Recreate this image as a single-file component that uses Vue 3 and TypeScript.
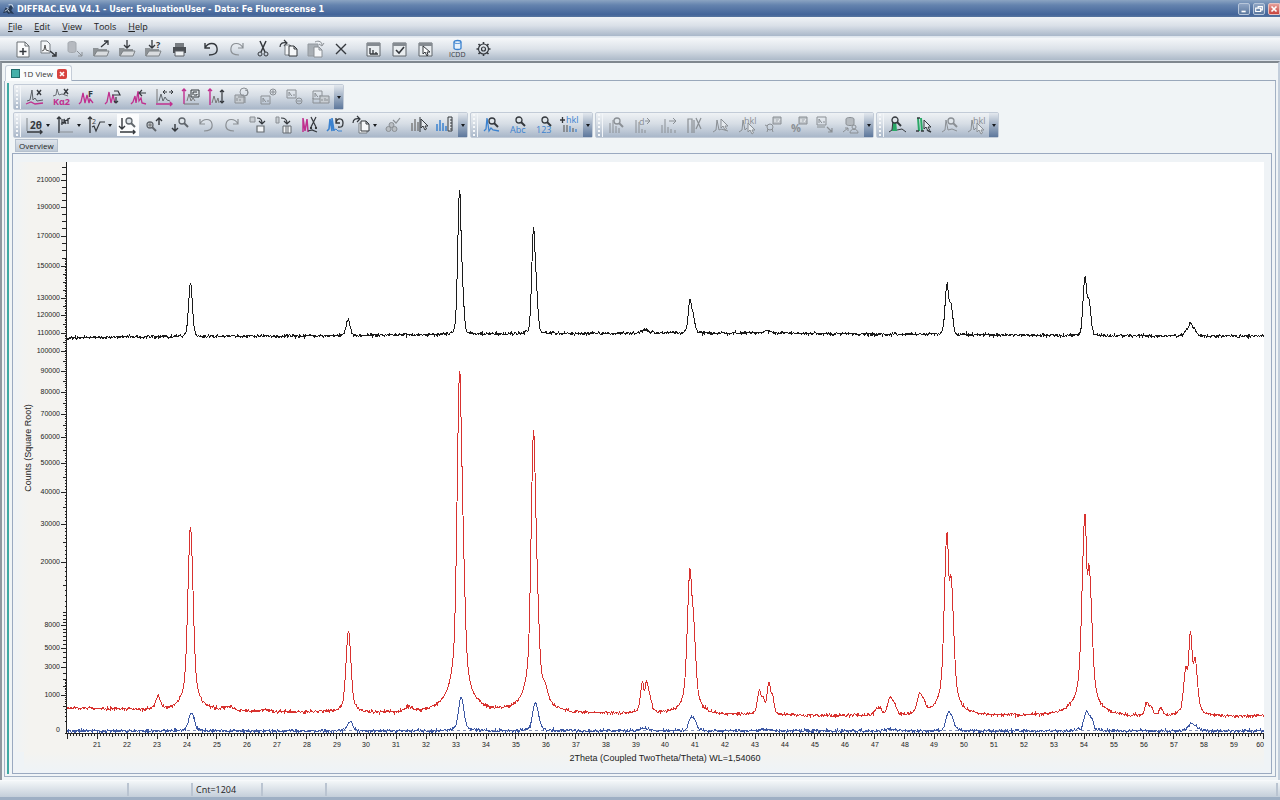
<script setup lang="ts">
interface Part { d?: string; s?: string; f?: string; w?: number; t?: string; x?: number; y?: number; z?: number; b?: boolean }
interface Tool { label: string; parts: Part[]; menu?: boolean; active?: boolean; gap?: boolean; off?: boolean }

const K = '#34383d'
const M = '#c0308f'
const G = '#8a8f94'
const B = '#3b82cf'
const N = '#2aa866'

const ln = (d: string, s = K, w = 1): Part => ({ d, s, w })
const fl = (d: string, f = K, s = 'none', w = 1): Part => ({ d, f, s, w })
const tx = (t: string, x: number, y: number, z: number, f = K, b = false): Part => ({ t, x, y, z, f, b })
const tool = (label: string, parts: Part[], extra: Partial<Tool> = {}): Tool => ({ label, parts, ...extra })
const off = { off: true }

const mag = (x: number, y: number, s = K): Part[] => [
  { d: `M${x - 3} ${y}a3 3 0 1 0 6 0a3 3 0 1 0 -6 0`, s, f: '#dfe5ea', w: 1.3 },
  ln(`M${x + 2} ${y + 2}l4 4`, s, 2),
]
const arrowCursor = (x: number, y: number, s = K): Part => fl(`M${x} ${y}v9l2 -2l2 4l1.500 -1l-1.500 -3h3z`, '#e4e9ee', s)
const folder = [fl('M2 9h5l1 1h8v7H2z', '#8d9296'), fl('M3 17l3 -5h12l-2 5z', '#d9dcdf', '#7d8286')]
const picture = (x: number, y: number, s = G): Part => ln(`M${x} ${y}h9v8h-9zM${x + 2} ${y + 6}v-4l2 3l1 1M${x + 7} ${y + 6}v-2`, s)
const corner = [fl('M10 2h8v7h-8z', '#bfc4c9', G), ln('M12 7v-3M15 7l2 -3', '#eef1f4')]
const page = (x: number, y: number, s = K): Part => fl(`M${x} ${y}h5l3 3v7h-8zM${x + 5} ${y}v3h3`, '#f5f7f9', s)
const undo = 'M4 4v5h5M4 9C7 3 15 3 16 9S12 16 8 16'
const redo = 'M16 4v5h-5M16 9C13 3 5 3 4 9S8 16 12 16'
const cut = [ln('M7 2L12 13M13 2L8 13', K, 1.5), ln('M9 15a2 2 0 1 1 -4 0a2 2 0 1 1 4 0M15 15a2 2 0 1 1 -4 0a2 2 0 1 1 4 0')]
const frame = [fl('M4 4h13v13H4z', '#e9edf0', '#5f656b'), fl('M4 4h13v3H4z', '#858b91')]

const mainTools: Tool[] = [
  tool('New', [fl('M4 3h8l4 4v11H4z', '#fafbfc', '#6b7075'), ln('M12 3v4h4', '#6b7075'), ln('M10 9v7M6.500 12.500h7', K, 1.5)]),
  tool('Import scan', [fl('M2 2h6l3 3v9H2z', '#f4f6f8', '#777c82'), ln('M3 12l2 -1l1 -5l1 5l3 1', '#555'), ln('M11 12l6 5M17 13v4h-4', K, 1.500)]),
  tool('Import from database', [fl('M3 4c0 -2 8 -2 8 0v8c0 2 -8 2 -8 0z', '#b6bac0', '#a3a8ae'), ln('M12 12l5 5M17 13v4h-4', G)], off),
  tool('Open', [...folder, ln('M10 8L17 2M13 2h4v4', K, 1.300)]),
  tool('Save', [...folder, ln('M10 1v8M7 6l3 3l3 -3', K, 1.300)]),
  tool('Save as', [...folder, ln('M9 1v8M6 6l3 3l3 -3', K, 1.300), tx('?', 13, 9, 9, K, true)]),
  tool('Print', [fl('M4 8h13v6H4z', '#4b4f54'), fl('M6 4h9v4H6z', '#777c81'), fl('M6 12h9v5H6z', '#eef1f3', '#5a5f64')]),
  tool('Undo', [ln(undo, K, 1.400)], { gap: true }),
  tool('Redo', [ln(redo, G, 1.200)], off),
  tool('Cut', cut),
  tool('Copy', [ln('M1 8C1 4 4 3 8 4M5 1l3 3l-3 3', K, 1.200), page(6, 6, '#777c82'), page(10, 7)]),
  tool('Paste', [fl('M3 5h10v12H3z', '#a9afb5', '#92989e'), page(9, 8, G), ln('M10 3C14 1 17 3 17 6M14 5l3 2l2 -3', G)], off),
  tool('Delete', [ln('M5 5L15 15M15 5L5 15', K, 1.400)]),
  tool('Scan list', [...frame, ln('M7 9v6M7 15h8M10 15v-4M13 15v-2', K, 1.300)], { gap: true }),
  tool('Check list', [...frame, ln('M7 11l3 3l5 -6', K, 1.600)]),
  tool('Pick', [...frame, fl('M8 7v8l2 -2l2 4l1 -1l-1 -3h3z', '#fff', K)]),
  tool('ICDD', [fl('M7 3c0 -2 7 -2 7 0v6c0 2 -7 2 -7 0z', '#e8f2fb', B, 1.300), ln('M7 3c0 2 7 2 7 0', B), tx('ICDD', 2, 18, 7, K)], { gap: true }),
  tool('Settings', [ln('M5.500 10a5 5 0 1 0 10 0a5 5 0 1 0 -10 0M8.500 10a2 2 0 1 0 4 0a2 2 0 1 0 -4 0', K, 1.200), ln('M10.500 3v2M10.500 15v2M3.500 10h2M15.500 10h2M5.500 5l1.500 1.500M14 13.500l1.500 1.500M15.500 5l-1.500 1.500M7 13.500l-1.500 1.500', K, 1.600)]),
]

const editTools: Tool[] = [
  tool('Remove background', [ln('M2 14L5 13L7 3L8 13L10 11L12 14L18 13', '#5b6066'), ln('M1 17L6 15L10 17L18 16', M, 1.300), ln('M12 3l4 5M16 3l-4 5', K, 1.400)]),
  tool('Strip K-alpha-2', [ln('M2 9L5 8L6 2L8 8L11 7L17 9', '#6b7076'), ln('M13 2l4 5M17 2l-4 5', K, 1.400), tx('Kα2', 2, 18, 9, M, true)]),
  tool('Fourier smoothing', [ln('M2 17L4 15L6 6L8 16L10 8L12 16L13 12L16 16', M, 1.300), tx('F', 11, 10, 9, K, true)]),
  tool('Smooth', [ln('M2 17L4 15L6 5L8 16L10 8L12 16', M, 1.300), ln('M9 8h8l-2 -4h-4M13 10v6M11 14l2 2l2 -2', K, 1.200)]),
  tool('Shift', [ln('M2 17L4 15L6 9L7 16L9 4L10 14L12 11L13 16L17 17', M, 1.300), ln('M17 6h-6M13 3l-3 3l3 3', K, 1.200)]),
  tool('X offset', [ln('M2 2v14', '#777'), ln('M4 14L6 7L8 14L10 10L12 13L15 14', '#60666c'), ln('M1 17h16M15 15l2 2l-2 2', M, 1.400), ln('M9 5h3M10 3l-2 2l2 2M14 5h3M16 3l2 2l-2 2', K)]),
  tool('Y scale', [ln('M3 17V2M1 4l2 -2l2 2', M, 1.400), ln('M3 17h15M6 14L8 7L10 14L12 11L14 14', '#777'), fl('M10 3h8v7h-8z', '#dfe4e9', K), ln('M12 8v-3h4M13 8h3v-1')]),
  tool('Y offset', [ln('M3 18V2M1 4l2 -2l2 2', M, 1.400), ln('M5 16L7 9L9 16L11 11L12 16', '#777'), ln('M15 3v13M13 5l2 -2l2 2M13 14l2 2l2 -2', K, 1.200)]),
  tool('Merge scans', [fl('M2 8h9v8H2z', '#c6cbd0', G), fl('M7 5a4 4 0 1 0 8 0a4 4 0 1 0 -8 0M5 10h7v6', 'none', G), ln('M12 3a3 3 0 1 1 0 6M4 14v-3M7 14v-2', G)], off),
  tool('Add scan', [picture(2, 9), ln('M11 5a3 3 0 1 0 6 0a3 3 0 1 0 -6 0M14 3v4M12 5h4', G)], off),
  tool('Subtract scan', [picture(2, 3), ln('M11 14a3 3 0 1 0 6 0a3 3 0 1 0 -6 0M12 14h4', G)], off),
  tool('Duplicate scan', [picture(2, 4), fl('M9 9h9v7H9z', '#c9ced3', G), ln('M11 14v-2M14 14v-3M16 14v-2M2 11v5h7', G)], off),
]

const viewTools: Tool[] = [
  tool('2 theta axis', [ln('M2 3v13', '#81878c'), ln('M2 17h15M15 15l2 2l-2 2', K, 1.400), tx('2θ', 5, 14, 10, K, true)], { menu: true }),
  tool('Y axis', [ln('M3 18V2M1 4l2 -2l2 2', K, 1.400), ln('M3 17h14', G), ln('M6 10V4M8 9V4L10 9M12 9V3M5 9L14 3', K, 1.200)], { menu: true }),
  tool('Square root scale', [ln('M3 18V2M1 4l2 -2l2 2', K, 1.300), tx('2', 5, 9, 7), ln('M5 12l2 -1l2 5l4 -9h5', K, 1.200)], { menu: true }),
  tool('Fit range', [ln('M4 3v11M1 11l3 3l3 -3M2 17h15M15 15l2 2l-2 2', K, 1.400), ...mag(11, 6, '#60666c')], { active: true }),
  tool('Zoom in', [...mag(6, 10, '#60666c'), ln('M4 10h4M6 8v4', '#666', 1), ln('M15 10V3M12 6l3 -3l3 3', K, 1.400)]),
  tool('Zoom out', [ln('M5 9v7M2 13l3 3l3 -3', K, 1.400), ...mag(12, 6, '#60666c')]),
  tool('Undo zoom', [ln(undo, G, 1.200)], off),
  tool('Redo zoom', [ln(redo, G, 1.200)], off),
  tool('Stack', [fl('M2 2h5v5H2z', '#c9ced3', G), fl('M9 11h7v6H9z', '#f2f4f6', '#656b70', 1.200), ln('M9 3c4 0 5 2 5 5M11 6l3 3l3 -3', K, 1.200)]),
  tool('Waterfall', [fl('M2 2h3v6H2z', '#c9ced3', G), fl('M9 11h8v7H9z', '#f2f4f6', '#656b70'), ln('M12 11v7M14 11v7', '#656b70'), ln('M7 3c5 0 6 2 6 5M10 6l3 3l3 -3', K, 1.200)]),
  tool('Cut range', [ln('M3 17V3L5 16L7 4L8 17', M, 1.500), ln('M11 2l5 10M16 2l-5 10M8 16l4 -1l5 2', K, 1.200), ln('M10 13h2M15 13h2', K, 2)]),
  tool('Restore range', [ln('M1 16L3 14L4 4L6 16V3L8 16', B, 1.600), ln('M8 15L10 14L12 16L16 16', B), ln('M10 3v5h4M10 8C11 2 17 3 17 8S14 12 12 12', K, 1.300)]),
  tool('Copy view', [ln('M1 8C1 4 4 3 8 4M5 1l3 3l-3 3', K, 1.200), page(7, 8, '#777c82'), page(9, 6)], { menu: true }),
  tool('Area', [fl('M6 10a2 2 0 1 0 5 0a2 2 0 1 0 -5 0M3 14a2 2 0 1 0 5 0a2 2 0 1 0 -5 0M9 14a2 2 0 1 0 5 0a2 2 0 1 0 -5 0', '#b9bec3', G), ln('M10 5l3 3l4 -5', G, 1.200)], off),
  tool('Select lines', [ln('M3 16V8M6 16V4M9 16V7', '#777', 1.400), ln('M11 17V2', K), arrowCursor(12, 4)]),
  tool('Ruler', [ln('M2 16V9M5 16V5M8 16V8M11 16v-5', B, 1.500), fl('M13 2h4v14h-4z', '#dfe4e9', K), ln('M15 5h2M15 8h2M15 11h2M15 14h2')]),
]

const searchTools: Tool[] = [
  tool('Search peaks', [ln('M2 16L4 14L5 3L7 16L9 13L11 15L17 16', B, 1.300), ...mag(10, 6)]),
  tool('Search by name', [...mag(11, 5), tx('Abc', 2, 18, 9, B)]),
  tool('Search by number', [...mag(11, 5), tx('123', 2, 18, 9, B)]),
  tool('Add hkl', [ln('M0 5h5M2.500 2v6', K, 1.300), tx('hkl', 6, 8, 9, B), ln('M4 17V10M7 17v-7M13 17v-4', '#666', 1.200), ln('M10 17v-6M16 17v-3', B, 1.200)]),
]

const lineTools: Tool[] = [
  tool('Find lines', [ln('M3 18V8M6 18V5M9 18V11M12 18V13', G), ...mag(10, 6, G)], off),
  tool('d shift', [ln('M3 18V5M6 18V7M9 18v-4M12 18v-3', G), tx('d', 6, 10, 9, G), ln('M12 6h5M14 3l3 3l-3 3', G)], off),
  tool('Move lines', [ln('M3 18V10M6 18V4M9 18v-6M12 18v-4M16 18v-3M10 6h7M14 3l3 3l-3 3', G)], off),
  tool('Cut lines', [ln('M3 18V4h4V18M9 18V5M11 3l5 11M16 3l-5 11', G, 1.200)], off),
  tool('Pick peak', [ln('M2 17L5 15L6 5L8 15L10 14L17 16', G), arrowCursor(10, 4, G)], off),
  tool('Pick hkl', [ln('M2 17L5 15L6 5L8 15L10 13', G), arrowCursor(11, 8, G), tx('hkl', 7, 9, 9, G)], off),
  tool('Tune cell', [ln('M4 12a3 3 0 1 0 6 0a3 3 0 1 0 -6 0M4 17l1 -3M10 17l-1 -3M2 10l2 1', G), ...corner], off),
  tool('Quantify', [tx('%', 2, 17, 11, G, true), ...corner], off),
  tool('Export picture', [picture(2, 2), ln('M2 12h8M12 12l5 5M17 13v4h-4', G, 1.200)], off),
  tool('Export to database', [fl('M5 4c0 -2 8 -2 8 0v5c0 2 -8 2 -8 0z', '#b6bbc0', G), ln('M2 17l5 -4M4 13h3v3M11 12a2 2 0 1 0 4 0a2 2 0 1 0 -4 0M9 18c0 -5 8 -5 8 0z', G)], off),
]

const areaTools: Tool[] = [
  tool('Peak search', [fl('M4 16L5 5H8L9 16z', N), ln('M1 17L4 15L5 5M9 15L14 14L18 17', K), ...mag(7, 5)]),
  tool('Pick area', [ln('M4 3L5 16M7 3L8 16', N, 2), ln('M2 16h3M3 3h3M7 16h3M13 15l4 2', K, 1.500), arrowCursor(10, 5)]),
  tool('Peak details', [ln('M2 17L5 15L6 5L8 15L12 14L17 16', G), ...mag(11, 6, G)], off),
  tool('Assign hkl', [ln('M2 17L5 15L6 5L8 15L10 13', G), arrowCursor(11, 8, G), tx('hkl', 7, 9, 9, G)], off),
]

const rows = [
  [{ name: 'Edit scan', tools: editTools }],
  [
    { name: 'View', tools: viewTools },
    { name: 'Search', tools: searchTools },
    { name: 'Lines', tools: lineTools },
    { name: 'Areas', tools: areaTools },
  ],
]
const menus = ['File', 'Edit', 'View', 'Tools', 'Help']

/* Chart geometry */
const left = 66
const zeroY = 733
const perRoot = 1.2066
const perDegree = 29.9
const xOf = (t: number) => 67.4 + (t - 20) * perDegree
const yOf = (c: number) => zeroY - perRoot * Math.sqrt(Math.max(c, 0))
const countsAt = (y: number) => ((zeroY - y) / perRoot) ** 2

const yLabels = [210000, 190000, 170000, 150000, 130000, 120000, 110000, 100000, 90000, 80000, 70000, 60000, 50000, 40000, 30000, 20000, 8000, 5000, 3000, 1000]

function yTicks(): string {
  const out: string[] = []
  const put = (c: number, len: number) => out.push(`M${left - len} ${Math.round(yOf(c)) + 0.5}H${left}`)
  for (let c = 155000; c <= 220000; c += 5000) put(c, 4)
  for (let c = 10000; c < 155000; c += 1000) put(c, c % 5000 === 0 ? 3 : 1)
  for (let c = 500; c <= 10000; c += 500) put(c, 3)
  for (let c = 0; c < 2000; c += 100) put(c, 1)
  yLabels.forEach((c) => put(c, 5))
  return out.join('')
}

function xTicks(): string {
  let d = ''
  for (let i = 0; i <= 400; i++) {
    const len = i % 10 === 0 ? 5 : i % 5 === 0 ? 3 : 2
    d += `M${Math.floor(xOf(20 + i / 10)) + 0.5} 734v${len}`
  }
  return d
}
const xLabels = Array.from({ length: 39 }, (_, i) => i + 21)

type Pt = [number, number]
type Peak = [number, number, number, number?]

function level(base: Pt[], x: number): number {
  for (let i = 1; i < base.length; i++) {
    const [x0, y0] = base[i - 1]
    const [x1, y1] = base[i]
    if (x <= x1) return y0 + ((y1 - y0) * (x - x0)) / (x1 - x0)
  }
  return base[base.length - 1][1]
}

const shape = (x: number, p: Peak, eta: number) => {
  const q = ((x - p[0]) / (x > p[0] ? p[3] ?? p[2] : p[2])) ** 2
  return eta / (1 + q) + (1 - eta) * Math.exp(-0.693 * q)
}

/* Peaks are [x, apex y, half width, right half width]; amplitudes are solved so that the sum passes each apex. */
function trace(base: Pt[], list: Peak[], eta: number, noise: number, seed: number): string {
  const amp = list.map(([x, y]) => countsAt(y) - countsAt(level(base, x)))
  const total = (x: number, skip = -1) =>
    list.reduce((sum, p, i) => (i === skip ? sum : sum + amp[i] * shape(x, p, eta)), countsAt(level(base, x)))
  for (let n = 0; n < 30; n++) list.forEach((p, i) => { amp[i] = Math.max(0, countsAt(p[1]) - total(p[0], i)) })
  let state = seed
  const rnd = () => {
    state = (state * 1103515245 + 12345) % 2147483648
    return state / 2147483648 - 0.5
  }
  const pts: string[] = []
  for (let x = 67; x <= 1264; x += 0.6) {
    const y = yOf(total(x))
    const calm = y < level(base, x) - 15 ? 0.2 : 1
    pts.push(`${x.toFixed(1)},${(y + (rnd() + rnd()) * noise * calm).toFixed(1)}`)
  }
  return pts.join(' ')
}

const black = trace(
  [[67, 338], [120, 337], [300, 336], [400, 335], [500, 334], [650, 333], [770, 333], [850, 334], [1000, 335], [1100, 336], [1264, 336]],
  [[190.5, 283, 2.2], [348, 321, 2.4], [459.5, 189, 2, 1.5], [462, 262, 1.4, 2], [533.5, 227, 2, 1.5], [536, 272, 1.4, 2], [645, 330, 4], [690, 299, 2, 1.6], [693, 312, 1.5, 2], [768, 331, 4], [947, 284, 2.2, 1.9], [951, 303, 1.8, 2], [1085, 276, 2.2, 1.9], [1089, 299, 1.8, 2.2], [1186, 330, 2], [1190.5, 322, 2], [1194.5, 328, 2]],
  0.2, 1.8, 7,
)
const red = trace(
  [[67, 708], [110, 709], [170, 711], [230, 711], [260, 712], [330, 713], [420, 714], [500, 714], [600, 714], [720, 715], [830, 716], [870, 716], [940, 717], [1020, 716], [1120, 717], [1200, 717], [1264, 716]],
  [[158, 696, 2.4], [190.5, 527, 2.4], [229, 706, 4], [265, 709, 4], [348.5, 631, 2.3], [409, 706, 4], [459.5, 370, 2.2, 1.7], [462, 466, 1.6, 2.4], [533.5, 430, 2.2, 1.7], [536, 517, 1.6, 2.4], [545, 682, 3], [642.5, 682, 2, 1.5], [646.5, 681, 1.5, 2], [650, 695, 2], [690, 568, 2.4, 1.7], [693, 606, 1.5, 2.4], [759.5, 690, 2, 1.6], [763, 696, 1.6], [769, 682, 2, 1.6], [772.5, 694, 1.6], [878.5, 707, 3], [890, 697, 2.4], [894, 702, 2.4], [919.5, 693, 2.4], [923.5, 698, 2.4], [947, 532, 2.4, 1.8], [951, 575, 1.6, 2.5], [1085, 513, 2.6, 1.7], [1089, 564, 1.5, 2.7], [1147, 702, 2], [1151, 706, 2], [1161, 708, 2], [1186, 666, 2.2, 1.5], [1190.5, 631, 1.8], [1195, 657, 1.6, 2.3]],
  0.36, 1.8, 21,
)
const blue = trace(
  [[67, 731], [1264, 731]],
  [[191.5, 713, 2.6], [350, 722, 2.8], [461, 697, 2.2], [463, 704, 2.2], [535, 703, 2.2], [537.5, 709, 2.2], [645, 728, 5], [691.5, 716, 2.2], [695, 720, 2.2], [765, 729, 5], [891, 729, 5], [948.5, 712, 2.2], [952, 716, 2.2], [1086.5, 711, 2.2], [1091, 717, 2.2], [1191.5, 723, 3], [1196, 726, 3]],
  0.16, 1.8, 93,
)
</script>

<template>
  <div class="app">
    <header class="title">
      <svg class="logo" viewBox="0 0 14 14" aria-hidden="true">
        <path d="M1 12l3-6 3 1 2-4 3 3-2 3 3 4-4-1-2 1-2-2z" fill="#263a55" />
        <path d="M3 10l3-2 2 3M7 3h4l1 3M5 6l2 1" stroke="#d8e2ee" fill="none" />
      </svg>
      <h1>DIFFRAC.EVA V4.1 - User: EvaluationUser - Data: Fe Fluorescense 1</h1>
      <div class="wins">
        <button type="button" aria-label="Minimize"><svg viewBox="0 0 12 12"><path d="M3 9h5" stroke="#fff" stroke-width="2" /></svg></button>
        <button type="button" aria-label="Restore"><svg viewBox="0 0 12 12"><path d="M5 5V3h5v4H8M2 5h6v4H2z" stroke="#fff" fill="none" stroke-width="1.400" /></svg></button>
        <button type="button" aria-label="Close" class="close"><svg viewBox="0 0 12 12"><path d="M3 3l6 6M9 3l-6 6" stroke="#fff" stroke-width="2" /></svg></button>
      </div>
    </header>

    <nav class="menu">
      <button v-for="m in menus" :key="m" type="button"><template v-if="m === 'Tools'">{{ m }}</template><template v-else><u>{{ m[0] }}</u>{{ m.slice(1) }}</template></button>
    </nav>

    <div class="main-bar" role="toolbar" aria-label="Standard">
      <button v-for="b in mainTools" :key="b.label" type="button" class="tool" :class="{ gap: b.gap }" :aria-label="b.label" :disabled="b.off">
        <svg class="ico" viewBox="0 0 20 20">
          <template v-for="(p, i) in b.parts" :key="i">
            <text v-if="p.t" :x="p.x" :y="p.y" :font-size="p.z" :fill="p.f" :font-weight="p.b ? 700 : 400">{{ p.t }}</text>
            <path v-else :d="p.d" :stroke="p.s" :fill="p.f ?? 'none'" :stroke-width="p.w" />
          </template>
        </svg>
      </button>
    </div>

    <main class="work">
      <div class="tabs">
        <div class="tab">
          <span class="swatch"></span>
          <span>1D View</span>
          <button type="button" aria-label="Close tab"><svg viewBox="0 0 10 10"><path d="M3 3l4 4M7 3l-4 4" stroke="#fff" stroke-width="1.600" /></svg></button>
        </div>
        <div class="rest"></div>
      </div>
      <section class="view">
        <div class="bars">
          <div v-for="(row, r) in rows" :key="r" class="row">
            <div v-for="g in row" :key="g.name" class="group" role="toolbar" :aria-label="g.name">
              <span class="grip"></span>
              <button v-for="b in g.tools" :key="b.label" type="button" class="tool" :class="{ wide: b.menu, active: b.active }" :aria-label="b.label" :disabled="b.off">
                <svg class="ico" viewBox="0 0 20 20">
                  <template v-for="(p, i) in b.parts" :key="i">
                    <text v-if="p.t" :x="p.x" :y="p.y" :font-size="p.z" :fill="p.f" :font-weight="p.b ? 700 : 400">{{ p.t }}</text>
                    <path v-else :d="p.d" :stroke="p.s" :fill="p.f ?? 'none'" :stroke-width="p.w" />
                  </template>
                </svg>
                <span v-if="b.menu" class="caret"></span>
              </button>
              <button type="button" class="more" :aria-label="g.name + ' options'"><span class="caret"></span></button>
            </div>
          </div>
        </div>
        <button type="button" class="overview">Overview</button>
        <div class="panel">
          <svg class="chart" viewBox="13 154 1258 619" role="img" aria-label="Counts over 2Theta">
            <defs>
              <linearGradient id="side" x1="0" x2="1" y1="0" y2="0">
                <stop offset="0" stop-color="#eff3f6" /><stop offset="1" stop-color="#f4f3f0" />
              </linearGradient>
              <linearGradient id="foot" x1="0" x2="0" y1="0" y2="1">
                <stop offset="0" stop-color="#f4f3f0" /><stop offset="1" stop-color="#eff3f6" />
              </linearGradient>
            </defs>
            <rect x="13" y="162" width="16" height="590" fill="url(#side)" />
            <rect x="29" y="162" width="1235" height="590" fill="#f4f3f0" />
            <rect x="24" y="752" width="1240" height="18" fill="url(#foot)" />
            <rect x="67" y="162" width="1197" height="572" fill="#fff" />
            <path d="M67 730.500H1264" stroke="#8590b5" stroke-dasharray="3 3" fill="none" />
            <g fill="none" shape-rendering="crispEdges">
              <polyline :points="blue" stroke="#3c58a4" />
              <polyline :points="red" stroke="#d8322f" />
              <polyline :points="black" stroke="#1c1c1c" />
              <path d="M66.500 162V734M66 733.500H1264" stroke="#222" />
              <path :d="yTicks()" stroke="#222" />
              <path :d="xTicks()" stroke="#222" />
            </g>
            <g class="num" text-anchor="end">
              <text v-for="c in yLabels" :key="c" x="60" :y="Math.round(yOf(c)) + 2">{{ c }}</text>
              <text x="60" y="732">0</text>
              <text x="1264" y="747">60</text>
            </g>
            <g class="num" text-anchor="middle">
              <text v-for="t in xLabels" :key="t" :x="Math.round(xOf(t))" y="747">{{ t }}</text>
            </g>
            <g class="axis" text-anchor="middle">
              <text x="665" y="761">2Theta (Coupled TwoTheta/Theta) WL=1,54060</text>
              <text transform="translate(31 448) rotate(-90)">Counts (Square Root)</text>
            </g>
          </svg>
        </div>
      </section>
    </main>

    <footer class="status">
      <span class="c1"></span><span class="c2"></span><span class="c3">Cnt=1204</span><span class="c2"></span><span class="last"></span>
    </footer>
  </div>
</template>

<style>
body { margin: 0; background: #e6ecf2; }
</style>

<style scoped>
.app {
  display: flex; flex-direction: column; height: 100vh; min-height: 480px; overflow: hidden;
  font: 9px/12px "Open Sans", "Noto Sans", sans-serif; color: #222;
}
button { font: inherit; color: inherit; background: none; border: 0; padding: 0; margin: 0; }
.title {
  display: flex; align-items: center; height: 17px; flex: none; padding-left: 2px;
  background: linear-gradient(#8ba4c2, #6483ae 30%, #44659a 85%, #56749f);
}
.logo { width: 13px; height: 13px; }
.title h1 {
  flex: 1; margin: 0 0 0 2px; color: #fff; white-space: nowrap;
  font: bold 9px/16px "DejaVu Sans Condensed", "DejaVu Sans", sans-serif;
}
.wins { display: flex; gap: 3px; }
.wins button { width: 12px; height: 12px; border: 1px solid #b7c6da; border-radius: 2px; background: linear-gradient(#8fa5c4, #5b789f); display: flex; }
.wins svg { width: 100%; height: 100%; }
.wins .close { background: linear-gradient(#e5a09a, #c9433c); border-color: #e8c2c0; border-radius: 2px 0 0 2px; }
.menu {
  display: flex; gap: 12px; height: 19px; flex: none; padding-left: 8px;
  background: linear-gradient(#f0f3f6, #dae0e8 45%, #a9b7c9); border-bottom: 1px solid #dfe6ee;
}
.menu button { height: 19px; }
.menu u { text-underline-offset: 1px; }
.main-bar {
  display: flex; height: 22px; flex: none; margin-top: 1px; padding-left: 10px; border-bottom: 1px solid #d9e0e8;
  background: linear-gradient(#f5f7f9, #dce2e9 50%, #adbac9);
}
.tool { width: 26px; height: 22px; flex: none; display: flex; align-items: center; justify-content: center; }
.tool.gap { margin-left: 6px; }
.ico { width: 20px; height: 20px; flex: none; overflow: visible; font-family: "Open Sans", "DejaVu Sans", sans-serif; }
.work {
  flex: 1; min-height: 0; display: flex; flex-direction: column;
  border-top: 2px solid #7f878e; border-left: 2px solid #8f979f; border-right: 2px solid #c3cedb;
  background: #f0f4f6; padding: 2px 2px 3px;
}
.tabs { display: flex; height: 16px; flex: none; }
.tab {
  display: flex; align-items: center; gap: 3px; padding: 0 4px 0 5px; margin-left: 1px;
  border: 1px solid #c5cdd8; border-bottom: 0; border-radius: 3px 3px 0 0; background: #fafcfd;
  font-size: 8px; white-space: nowrap; color: #333;
}
.swatch { width: 7px; height: 7px; border: 1px solid #216c6c; background: #45b0a9; }
.tab button { width: 10px; height: 10px; margin-left: 1px; border-radius: 2px; background: #d8433f; display: flex; }
.tab svg { width: 100%; height: 100%; }
.rest { flex: 1; border-bottom: 1px solid #9aa8bb; }
.view {
  flex: 1; min-height: 0; display: flex; flex-direction: column;
  border: solid #a3b1c4; border-width: 0 1px 1px; padding: 2px 3px 2px 7px;
  background: linear-gradient(#3fa9a3, #3fa9a3) 2px 2px / 2px calc(100% - 4px) no-repeat, #f0f4f6;
}
.bars { display: flex; flex-direction: column; gap: 2px; padding: 1px 0 1px 1px; }
.row { display: flex; gap: 2px; }
.group {
  display: flex; height: 24px; border: 1px solid #c2cbd7; border-radius: 2px;
  background: linear-gradient(#eff2f5, #d6dde5 45%, #a9b7c9);
}
.grip {
  width: 6px; flex: none; margin-right: 1px; border-right: 1px solid #f2f5f8;
  background: radial-gradient(circle, #f6f8fa 1px, transparent 1px) 1px 4px / 4px 4px;
}
.group .tool { height: 24px; }
.group .wide { width: 31px; justify-content: flex-start; padding-left: 3px; }
.active { background: #fbfcfd content-box; padding: 1px 2px; box-sizing: border-box; }
.caret { width: 0; height: 0; border: 2px solid transparent; border-top: 3px solid #16191d; border-bottom: 0; }
.wide .caret { margin-left: 1px; }
.more { width: 9px; display: flex; align-items: center; justify-content: center; background: linear-gradient(#e3e8ee, #9dadc2 50%, #5d779c); }
.overview {
  align-self: flex-start; height: 13px; margin-left: 3px; padding: 0 3px; border: 1px solid #b5c0ce; line-height: 11px;
  background: linear-gradient(#dfe5ec, #bfcad7); font-size: 8px; color: #222;
}
.panel { flex: 1; min-height: 0; margin-top: 1px; border: 1px solid #9aa9c0; background: #eff3f6; display: flex; }
.chart { width: 100%; height: 100%; display: block; }
.num { font: 7px "Liberation Sans", Arial, sans-serif; fill: #222; }
.axis { font: 9px "Liberation Sans", Arial, sans-serif; fill: #222; }
.status {
  display: flex; align-items: center; height: 16px; flex: none; padding: 0 2px; border-top: 1px solid #f7f9fb; border-bottom: 3px solid #9eafc4;
  background: linear-gradient(#f3f6f8, #d7dee6 60%, #c4ceda);
}
.status span { height: 13px; line-height: 13px; border-right: 2px solid #bac4d1; box-sizing: border-box; }
.c1 { width: 127px; }
.c2 { width: 64px; }
.c3 { width: 70px; padding-left: 3px; }
.last { flex: 1; }
</style>
